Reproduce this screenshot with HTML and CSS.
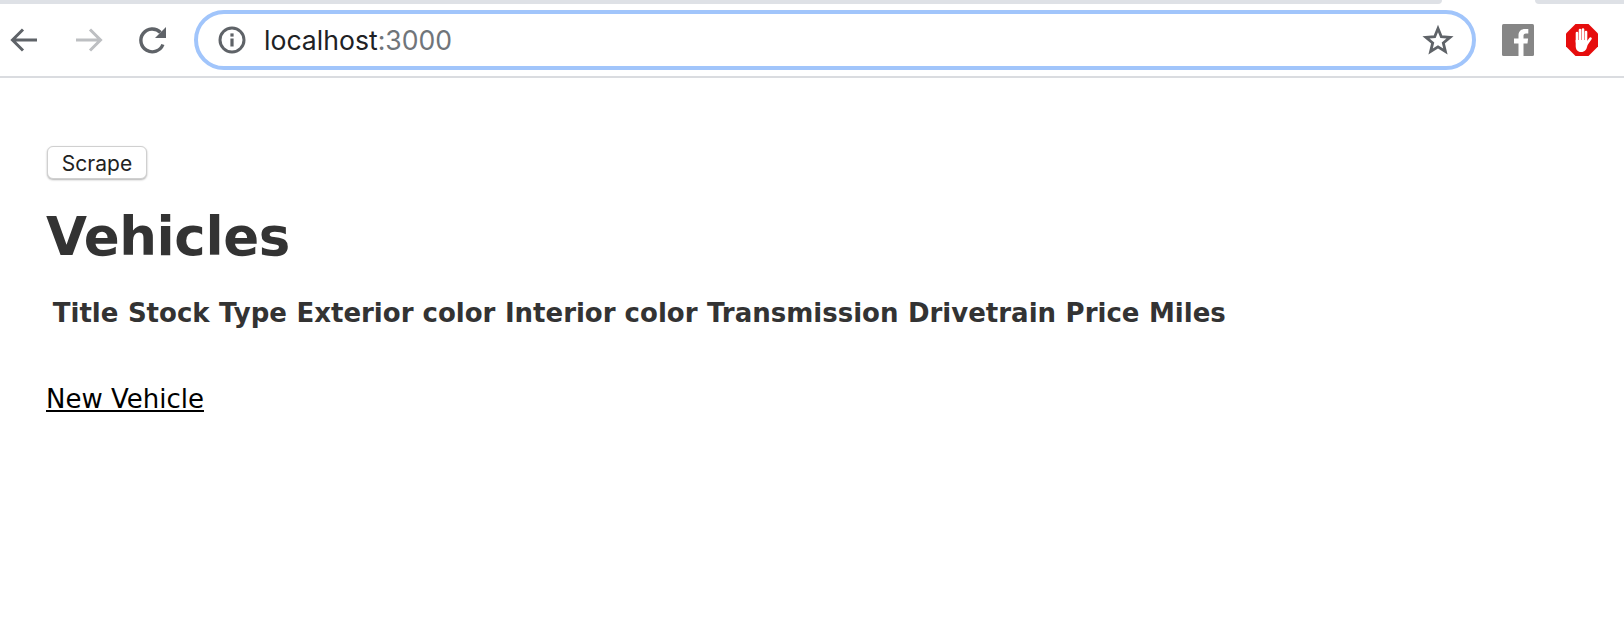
FILE: index.html
```html
<!DOCTYPE html>
<html lang="en">
<head>
    <meta charset="UTF-8">
    <title>Vehicles</title>
    <link rel="stylesheet" href="styles.css">
</head>
<body>
    <div class="tab-strip">
        <div class="tab-left"></div>
        <div class="tab-right"></div>
    </div>

    <div class="toolbar">
        <svg class="nav-icon" width="30" height="30" viewBox="0 0 30 30">
            <path d="M28 15H4M14 4.500L3.500 15L14 25.500" fill="none" stroke="#5f6368" stroke-width="3"/>
        </svg>
        <svg class="nav-icon forward" width="30" height="30" viewBox="0 0 30 30">
            <path d="M2 15H26M16 4.500L26.500 15L16 25.500" fill="none" stroke="#bdbfc2" stroke-width="3"/>
        </svg>
        <svg class="nav-icon reload" width="30" height="30" viewBox="0 0 30 30">
            <path d="M24.900 19.500A11.400 11.400 0 1 1 22.500 7.500" fill="none" stroke="#5f6368" stroke-width="3.400"/>
            <path d="M28 2V13H17Z" fill="#5f6368"/>
        </svg>

        <div class="address-bar">
            <svg class="info-icon" width="28" height="28" viewBox="0 0 28 28">
                <circle cx="14" cy="14" r="12" fill="none" stroke="#5f6368" stroke-width="3"/>
                <rect x="12.400" y="12.500" width="3.200" height="8" fill="#5f6368"/>
                <rect x="12.400" y="7.400" width="3.200" height="3.200" fill="#5f6368"/>
            </svg>
            <span class="url">localhost<span class="port">:3000</span></span>
            <svg class="star-icon" width="32" height="32" viewBox="0 0 32 32">
                <path d="M16 4.500L19.300 12.700L28 13.300L21.300 18.900L23.400 27.400L16 22.800L8.600 27.400L10.700 18.900L4 13.300L12.700 12.700Z" fill="none" stroke="#5f6368" stroke-width="2.800"/>
            </svg>
        </div>

        <svg class="ext-icon fb" width="32" height="32" viewBox="0 0 32 32">
            <rect width="32" height="32" rx="1.500" fill="#868686"/>
            <path d="M21.500 32V19.500H25.500L26.100 14.500H21.500V11.800C21.500 10.300 22 9.400 24 9.400H26.300V5.100C25.800 5 24.500 4.900 22.900 4.900C19.500 4.900 16.500 6.900 16.500 11.100V14.500H12V19.500H16.500V32Z" fill="#fff"/>
        </svg>
        <svg class="ext-icon abp" width="32" height="32" viewBox="0 0 32 32">
            <path d="M9.500 0H22.500L32 9.500V22.500L22.500 32H9.500L0 22.500V9.500Z" fill="#e60d0d"/>
            <g fill="none" stroke="#fff" stroke-width="2.600" stroke-linecap="round">
                <path d="M11 18V9"/>
                <path d="M14 16V6"/>
                <path d="M17 16V5.500"/>
                <path d="M20 18V8"/>
                <path d="M20 21L24.500 14.500"/>
            </g>
            <path d="M9.700 16H21.300V22C20.500 25.500 19 28 15 28C11.500 28 9.700 25.500 9.700 22Z" fill="#fff"/>
        </svg>
    </div>

    <div class="page">
        <button class="scrape-btn">Scrape</button>
        <h1>Vehicles</h1>

        <table class="vehicles">
            <thead>
                <tr>
                    <th>Title</th>
                    <th>Stock</th>
                    <th>Type</th>
                    <th>Exterior color</th>
                    <th>Interior color</th>
                    <th>Transmission</th>
                    <th>Drivetrain</th>
                    <th>Price</th>
                    <th>Miles</th>
                </tr>
            </thead>
        </table>

        <a class="new-link" href="#">New Vehicle</a>
    </div>
</body>
</html>
```

FILE: styles.css
```css
* {
    margin: 0;
    padding: 0;
    box-sizing: border-box;
}

body {
    background: #fff;
    font-family: 'DejaVu Sans', Verdana, sans-serif;
    color: #333;
}

.tab-strip {
    display: flex;
    justify-content: space-between;
    height: 4px;
}

.tab-left {
    width: 1442px;
    background: #dee1e6;
    border-bottom-right-radius: 8px;
}

.tab-right {
    width: 89px;
    background: #dee1e6;
    border-bottom-left-radius: 8px;
}

.toolbar {
    display: flex;
    align-items: center;
    height: 74px;
    padding: 0 26px 0 9px;
    border-bottom: 2px solid #dadce0;
}

.nav-icon {
    flex: none;
}

.forward {
    margin-left: 35px;
}

.reload {
    margin-left: 34px;
}

.address-bar {
    display: flex;
    align-items: center;
    flex: 1;
    height: 60px;
    margin-left: 26px;
    padding: 0 18px 0 20px;
    border: 4px solid #a1c5fb;
    border-radius: 30px;
}

.info-icon {
    flex: none;
}

.url {
    flex: 1;
    margin-left: 18px;
    font-family: Inter, 'Liberation Sans', sans-serif;
    font-size: 26.600px;
    color: #202124;
}

.port {
    color: #70757a;
}

.star-icon {
    flex: none;
}

.ext-icon {
    flex: none;
}

.fb {
    margin-left: 26px;
}

.abp {
    margin-left: 32px;
}

.page {
    padding: 68px 46px 0;
}

.scrape-btn {
    display: block;
    width: 100px;
    height: 33px;
    margin-left: 1px;
    padding-top: 1px;
    background: #fff;
    border: 1px solid #d0d0d0;
    border-radius: 6px;
    box-shadow: 0 1px 2px rgba(0, 0, 0, 0.3);
    font-family: Inter, 'Liberation Sans', sans-serif;
    font-size: 21px;
    color: #222;
}

h1 {
    margin-top: 26px;
    font-size: 53px;
    line-height: 64px;
    letter-spacing: -0.400px;
    font-weight: 700;
}

.vehicles {
    margin-top: 26px;
    margin-left: 2px;
    border-spacing: 0;
}

.vehicles th {
    padding: 0 4.750px;
    font-size: 26px;
    line-height: 36px;
    font-weight: 700;
    white-space: nowrap;
}

.new-link {
    display: inline-block;
    margin-top: 52px;
    font-size: 26px;
    line-height: 32px;
    color: #000;
}
```
